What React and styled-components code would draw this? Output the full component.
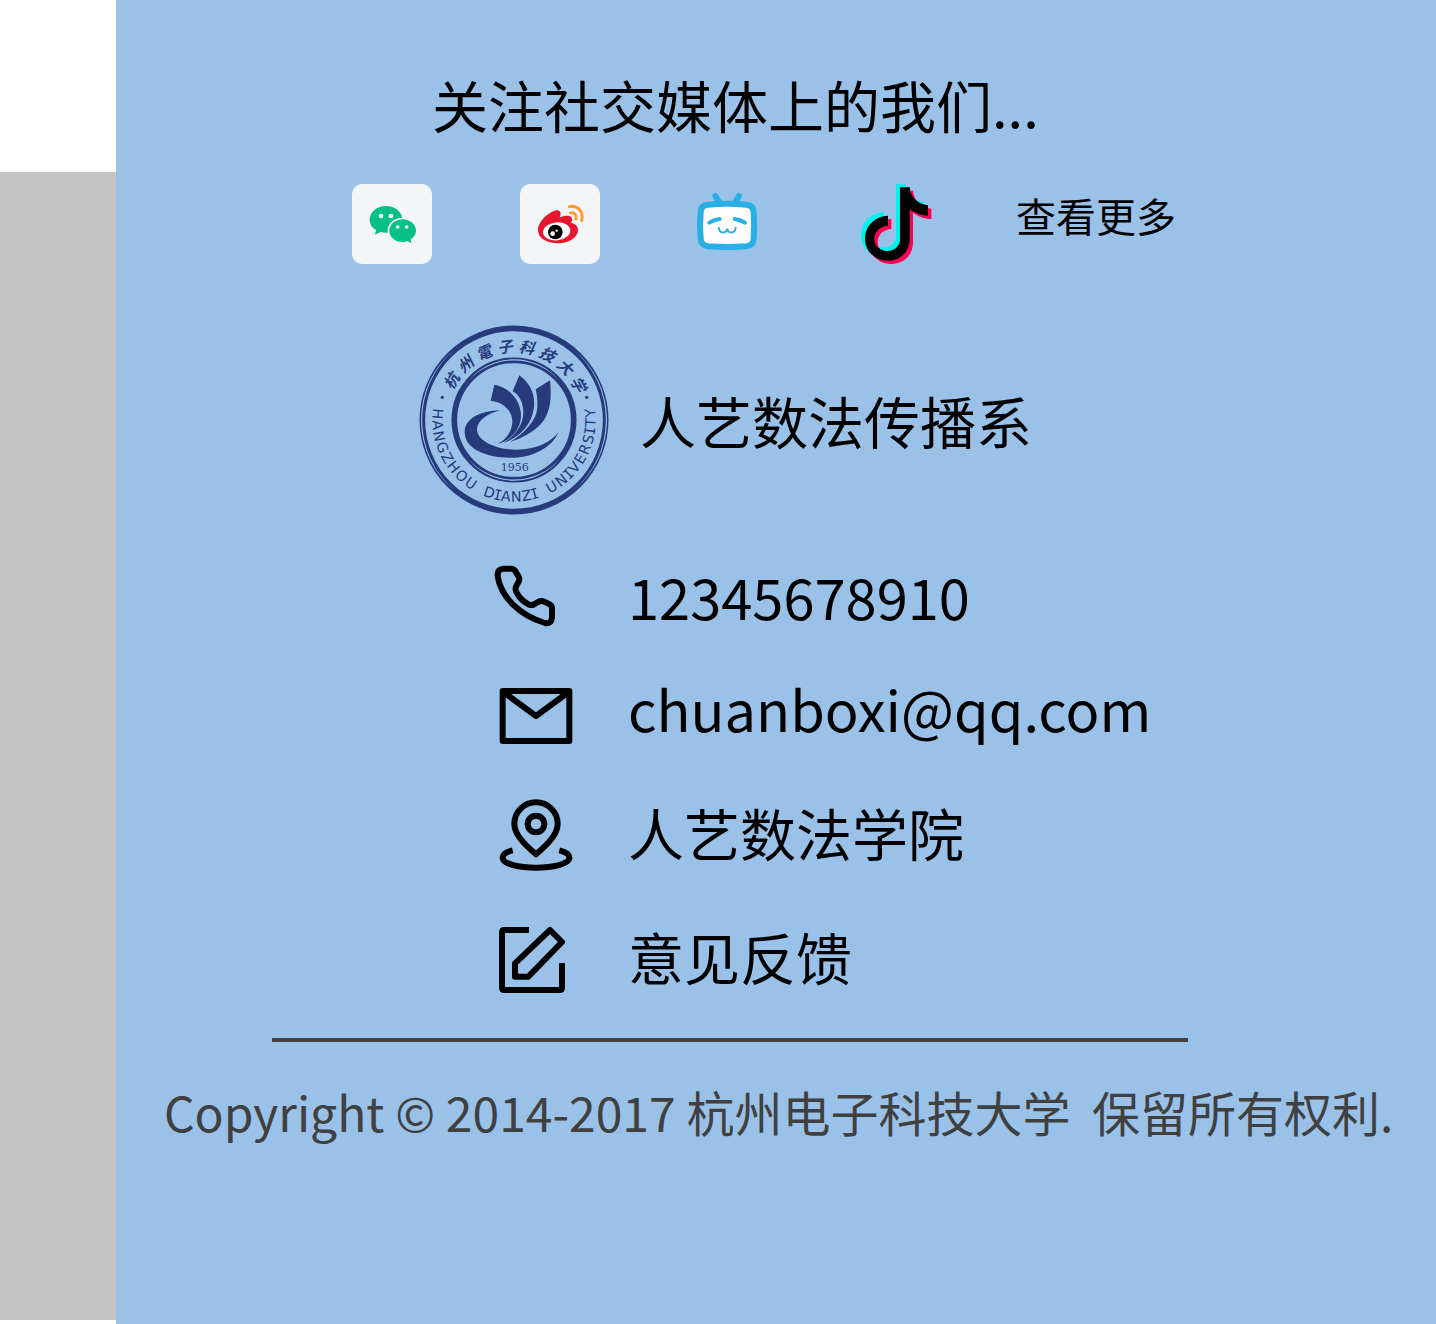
import React from "react";
import styled, { createGlobalStyle } from "styled-components";

const SKY = "#9ac2e9";
const NAVY = "#263a7c";

const GlobalStyle = createGlobalStyle`
  * { box-sizing: border-box; }
  body {
    margin: 0;
    background: #fff;
    color: #000;
    font-family: "Noto Sans CJK SC", "Noto Sans", sans-serif;
  }
  a { color: inherit; text-decoration: none; }
`;

const Page = styled.div`
  display: flex;
  min-height: 100vh;
`;

const Rail = styled.aside`
  display: flex;
  flex: 0 0 116px;
  padding: 172px 0 4px;
`;

const RailFill = styled.div`
  flex: 1;
  background: #c4c4c4;
`;

const Panel = styled.footer`
  flex: 1;
  min-width: 0;
  padding-top: 62px;
  background: ${SKY};
`;

const Heading = styled.h1`
  margin: 0 0 38px 316px;
  font-size: 56px;
  font-weight: 400;
  line-height: 84px;
  white-space: nowrap;
`;

const SocialRow = styled.nav`
  display: flex;
  align-items: flex-start;
  gap: 80px;
  margin-left: 236px;
`;

const SocialList = styled.div`
  display: flex;
  gap: 88px;
`;

const SocialLink = styled.a`
  display: block;
  width: 80px;
  height: 80px;
  overflow: hidden;
  border-radius: ${(p) => (p.$tile ? "10px" : "0")};
  background: ${(p) => (p.$tile ? "#f4f5f7" : "transparent")};

  svg { display: block; width: 100%; height: 100%; }
`;

const MoreLink = styled.a`
  font-size: 40px;
  line-height: 62px;
  white-space: nowrap;
`;

const Brand = styled.section`
  display: flex;
  align-items: center;
  gap: 30px;
  margin: 60px 0 24px 302px;
`;

const SealSvg = styled.svg`
  flex: none;
  width: 192px;
  height: 192px;
`;

const BrandName = styled.h2`
  margin: 0;
  font-size: 56px;
  font-weight: 400;
  line-height: 84px;
  white-space: nowrap;
`;

const ContactList = styled.address`
  display: grid;
  grid-template-rows: 112px 112px 136px 112px;
  margin-left: 372px;
  font-style: normal;
`;

const ContactRow = styled.div`
  display: flex;
  align-items: center;
  gap: 44px;
  font-size: 56px;
  line-height: 84px;
  white-space: nowrap;
`;

const LineIcon = styled.svg`
  flex: none;
  width: 96px;
  height: 96px;
  fill: none;
  stroke: #000;
  stroke-width: 18px;
  stroke-linejoin: round;
`;

const Divider = styled.hr`
  height: 4px;
  margin: 26px 248px 33px 156px;
  border: 0;
  background: #404040;
`;

const Copyright = styled.p`
  margin: 0 0 0 48px;
  color: #404040;
  font-size: 48px;
  line-height: 72px;
  white-space: pre;
`;

function Wechat() {
  return (
    <svg viewBox="36 42 240 240" aria-hidden="true">
      <g fill="#06c088">
        <path d="M138 108C111 108 89 126 89 149C89 162 96 173 108 180L105 194L122 186Q130 188 138 188C165 188 187 170 187 148S165 108 138 108Z" />
        <path stroke="#f4f5f7" strokeWidth="10" paintOrder="stroke" d="M188 148C166 148 148 163 148 182S166 216 188 216Q195 216 202 213L214 220L212 208C222 202 228 192 228 182C228 163 210 148 188 148Z" />
      </g>
      <g fill="#fff">
        <circle cx="123" cy="138" r="7" />
        <circle cx="153" cy="138" r="7" />
        <circle cx="173" cy="171" r="5.5" />
        <circle cx="200" cy="171" r="5.5" />
      </g>
    </svg>
  );
}

function Weibo() {
  return (
    <svg viewBox="540 42 240 240" aria-hidden="true">
      <path fill="#e6162d" d="M594 181C594 152 633 121 652 121C663 122 664 133 659 142C672 137 690 134 695 143C698 149 696 153 693 158C706 161 714 168 714 180C714 202 686 220 655 220C620 220 594 205 594 181Z" />
      <ellipse cx="650" cy="184" rx="41" ry="27" fill="#fff" transform="rotate(-6 650 184)" />
      <circle cx="646" cy="186" r="22" />
      <circle cx="638" cy="191" r="7" fill="#fff" />
      <circle cx="650" cy="182" r="3.5" fill="#fff" />
      <g fill="none" stroke="#fd9b31" strokeWidth="9" strokeLinecap="round">
        <path d="M692 129C704 126 711 137 708 147" />
        <path d="M688 110C712 104 732 125 725 152" />
      </g>
    </svg>
  );
}

function Bilibili() {
  return (
    <svg viewBox="24 42 240 240" aria-hidden="true">
      <g fill="none" stroke="#29aee6" strokeLinecap="round">
        <path strokeWidth="18" d="M106 78L118 98M177 78L165 98" />
        <path
          fill="#fff"
          strokeWidth="18"
          d="M84 104Q141 99 199 104Q220 105 221 127Q224 166 221 206Q220 227 199 229Q141 233 84 229Q63 227 62 206Q58 166 62 127Q63 105 84 104Z"
        />
        <path strokeWidth="12" d="M88 158Q102 149 119 147M164 147Q181 149 195 158" />
        <path strokeWidth="6" d="M117 174C118 191 139 192 141.500 176C144 192 165 191 167 174" />
      </g>
    </svg>
  );
}

const NOTE =
  "M660 52H689C691 80 712 103 744 106V137C722 137 704 129 689 118V208C689 246 660 272 624 272C585 272 555 243 555 206C555 168 585 138 624 137V167C601 168 583 184 583 206C583 228 601 243 622 243C644 243 660 228 660 208Z";

function Tiktok() {
  return (
    <svg viewBox="528 42 240 240" aria-hidden="true">
      <path d={NOTE} fill="#00f2ea" transform="translate(-12 -10)" />
      <path d={NOTE} fill="#ff0050" transform="translate(10 10)" />
      <path d={NOTE} />
    </svg>
  );
}

const SEAL_CHARACTERS = [..."杭州電子科技大学"];

// Start and end of each word on the lower rim, in degrees counted from the left.
const SEAL_WORDS = [
  { word: "HANGZHOU", from: -9, to: 60 },
  { word: "DIANZI", from: 67, to: 108 },
  { word: "UNIVERSITY", from: 115, to: 189 },
];

const ADVANCE = {
  H: 75, A: 68, N: 75, G: 77, Z: 68, O: 79, U: 73, D: 77, I: 44, V: 68, E: 63, R: 70, S: 63, T: 61, Y: 61,
};

const rimLetters = SEAL_WORDS.flatMap(({ word, from, to }) => {
  const letters = [...word];
  const total = letters.reduce((sum, letter) => sum + ADVANCE[letter], 0);
  let used = 0;
  return letters.map((letter, i) => {
    const middle = used + ADVANCE[letter] / 2;
    used += ADVANCE[letter];
    return { key: `${word}-${i}`, letter, turn: 90 - (from + ((to - from) * middle) / total) };
  });
});

function Seal() {
  return (
    <SealSvg viewBox="24 24 576 576" role="img" aria-label="杭州电子科技大学">
      <g fill="none" stroke={NAVY}>
        <circle cx="312" cy="312" r="275" strokeWidth="17" />
        <circle cx="312" cy="312" r="179" strokeWidth="17" />
      </g>
      <g fill={SKY}>
        <path d="M134 100A273 273 0 0 0 134 524A279 279 0 0 1 134 100Z" />
        <path d="M490 100A273 273 0 0 1 490 524A279 279 0 0 0 490 100Z" />
        <path d="M174 196A177 177 0 0 1 450 196A183 183 0 0 0 174 196Z" />
        <path d="M174 428A177 177 0 0 0 450 428A183 183 0 0 1 174 428Z" />
      </g>
      <g fill={NAVY}>
        <path d="M272 283C205 285 163 310 164 350C166 400 230 426 310 425C370 424 425 395 446 349C420 380 380 401 320 401C250 400 200 370 201 340C203 310 235 292 272 283Z" />
        <path d="M253 206C300 213 334 258 333 300C331 340 305 372 262 384C290 370 308 342 307 315C306 280 275 257 242 254Z" />
        <path d="M328 178C362 202 378 240 371 280C364 325 332 362 280 382C315 360 340 325 340 290C340 257 326 235 308 226Z" />
        <path d="M420 193C425 240 424 290 392 325C365 352 335 367 300 378C345 350 380 312 382 275C383 250 381 236 377 220Z" />
        <circle cx="97" cy="244" r="5" />
        <circle cx="530" cy="244" r="5" />
        <text x="314" y="464" textAnchor="middle" fontFamily="DejaVu Serif, serif" fontSize="33">1956</text>
        <g fontSize="43" textAnchor="middle">
          {rimLetters.map(({ key, letter, turn }) => (
            <text
              key={key}
              x="312"
              y="557"
              fontFamily={letter === "I" ? "DejaVu Sans Mono, monospace" : "DejaVu Sans, sans-serif"}
              transform={`rotate(${turn} 312 312)`}
            >
              {letter}
            </text>
          ))}
        </g>
        <g fontSize="46" fontWeight="700" fontStyle="italic" textAnchor="middle">
          {SEAL_CHARACTERS.map((character, i) => (
            <text key={character} x="312" y="108" transform={`rotate(${-58 + i * 17} 312 312)`}>
              {character}
            </text>
          ))}
        </g>
      </g>
    </SealSvg>
  );
}

function PhoneIcon() {
  return (
    <LineIcon viewBox="24 -6 288 288" aria-hidden="true">
      <path d="M70 56H96Q102 57 105 62L116 80Q120 87 116 95L108 110Q105 117 109 126C117 143 131 156 148 164Q155 167 162 163L174 156Q184 151 193 155L209 163Q216 167 216 175V202C215 215 208 222 195 219C118 196 62 140 53 78Q51 58 70 56Z" />
    </LineIcon>
  );
}

function MailIcon() {
  return (
    <LineIcon viewBox="24 330 288 288" aria-hidden="true">
      <path d="M68 423H268V573H68ZM70 426L168 498L266 426" />
    </LineIcon>
  );
}

function PinIcon() {
  return (
    <LineIcon viewBox="24 12 288 288" aria-hidden="true">
      <path d="M168 223C130 190 103 162 103 131A65 64 0 0 1 233 131C233 162 206 190 168 223Z" />
      <circle cx="168" cy="132" r="25" />
      <path d="M98 211C76 216 66 226 68 235C72 252 115 263 168 263C221 263 264 252 268 235C270 226 260 216 238 211" />
    </LineIcon>
  );
}

function EditIcon() {
  return (
    <LineIcon viewBox="24 384 288 288" aria-hidden="true">
      <path d="M147 450H73Q66 450 66 457V623Q66 630 73 630H239Q246 630 246 623V549" />
      <path d="M210 450L246 486L145 590H105V550Z" />
    </LineIcon>
  );
}

export default function App() {
  return (
    <>
      <GlobalStyle />
      <Page>
        <Rail>
          <RailFill />
        </Rail>
        <Panel>
          <Heading>关注社交媒体上的我们...</Heading>
          <SocialRow>
            <SocialList>
              <SocialLink $tile href="#wechat" aria-label="微信"><Wechat /></SocialLink>
              <SocialLink $tile href="#weibo" aria-label="微博"><Weibo /></SocialLink>
              <SocialLink href="#bilibili" aria-label="哔哩哔哩"><Bilibili /></SocialLink>
              <SocialLink href="#douyin" aria-label="抖音"><Tiktok /></SocialLink>
            </SocialList>
            <MoreLink href="#more">查看更多</MoreLink>
          </SocialRow>
          <Brand>
            <Seal />
            <BrandName>人艺数法传播系</BrandName>
          </Brand>
          <ContactList>
            <ContactRow><PhoneIcon /><a href="tel:12345678910">12345678910</a></ContactRow>
            <ContactRow><MailIcon /><a href="mailto:chuanboxi@qq.com">chuanboxi@qq.com</a></ContactRow>
            <ContactRow><PinIcon /><span>人艺数法学院</span></ContactRow>
            <ContactRow><EditIcon /><a href="#feedback">意见反馈</a></ContactRow>
          </ContactList>
          <Divider />
          <Copyright>{"Copyright © 2014-2017 杭州电子科技大学\u00a0 保留所有权利."}</Copyright>
        </Panel>
      </Page>
    </>
  );
}
